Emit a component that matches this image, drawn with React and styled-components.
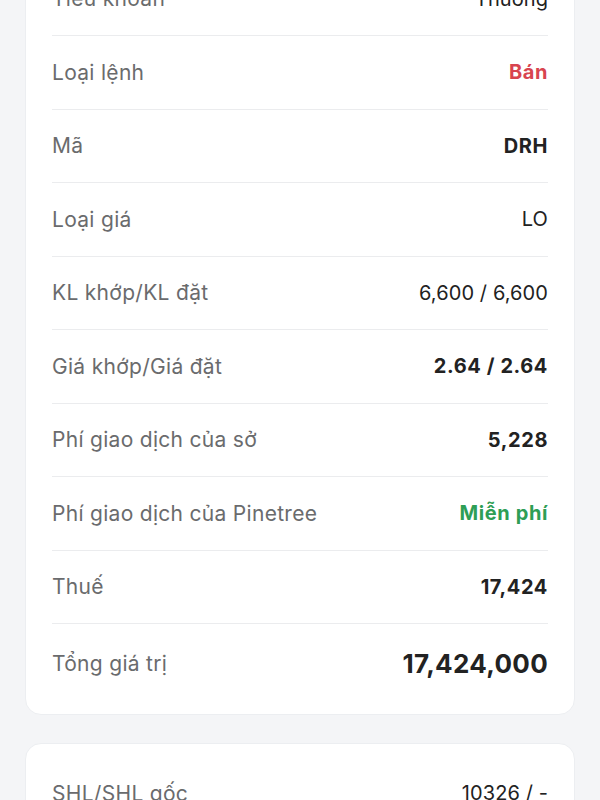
import React from 'react'
import styled, { createGlobalStyle } from 'styled-components'

const GlobalStyle = createGlobalStyle`
  html, body {
    margin: 0;
    padding: 0;
    background-color: #f4f5f7;
    font-family: Inter, Roboto, "Noto Sans", Arial, sans-serif;
    overflow: hidden;
  }
`

const Page = styled.div`
  margin-top: -46.5px;
  padding: 0 25px;
  display: flex;
  flex-direction: column;
  gap: 28px;
`

const Card = styled.div`
  background-color: #fff;
  border: 1px solid #eceef1;
  border-radius: 16px;
  padding: ${p => p.top || 8}px 26px 12px 26px;
`

const Row = styled.div`
  display: flex;
  align-items: center;
  justify-content: space-between;
  height: ${p => (p.big ? '78px' : '72.5px')};
  border-bottom: ${p => (p.last ? 'none' : '1px solid #ebecee')};
`

const Label = styled.span`
  font-size: 21px;
  color: #6a6b6d;
  letter-spacing: 0.3px;
`

const Value = styled.span`
  font-size: ${p => (p.big ? '26px' : '20px')};
  font-weight: ${p => (p.bold ? 700 : 400)};
  color: ${p => p.color || '#222'};
  letter-spacing: ${p => (p.big ? '0.3px' : p.bold ? '0.6px' : '0.1px')};
`

const rows = [
  { label: 'Tiểu khoản', value: 'Thường' },
  { label: 'Loại lệnh', value: 'Bán', bold: true, color: '#d8444f' },
  { label: 'Mã', value: 'DRH', bold: true },
  { label: 'Loại giá', value: 'LO' },
  { label: 'KL khớp/KL đặt', value: '6,600 / 6,600' },
  { label: 'Giá khớp/Giá đặt', value: '2.64 / 2.64', bold: true },
  { label: 'Phí giao dịch của sở', value: '5,228', bold: true },
  { label: 'Phí giao dịch của Pinetree', value: 'Miễn phí', bold: true, color: '#2e9e55' },
  { label: 'Thuế', value: '17,424', bold: true },
]

const App = () => {
  return (
    <>
      <GlobalStyle />
      <Page>
        <Card>
          {rows.map(r => (
            <Row key={r.label}>
              <Label>{r.label}</Label>
              <Value bold={r.bold} color={r.color}>{r.value}</Value>
            </Row>
          ))}
          <Row big last>
            <Label>Tổng giá trị</Label>
            <Value big bold>17,424,000</Value>
          </Row>
        </Card>
        <Card top={13}>
          <Row last>
            <Label>SHL/SHL gốc</Label>
            <Value>10326 / -</Value>
          </Row>
          <Row last>
            <Label>Ngày đặt</Label>
            <Value>—</Value>
          </Row>
        </Card>
      </Page>
    </>
  )
}

export default App
